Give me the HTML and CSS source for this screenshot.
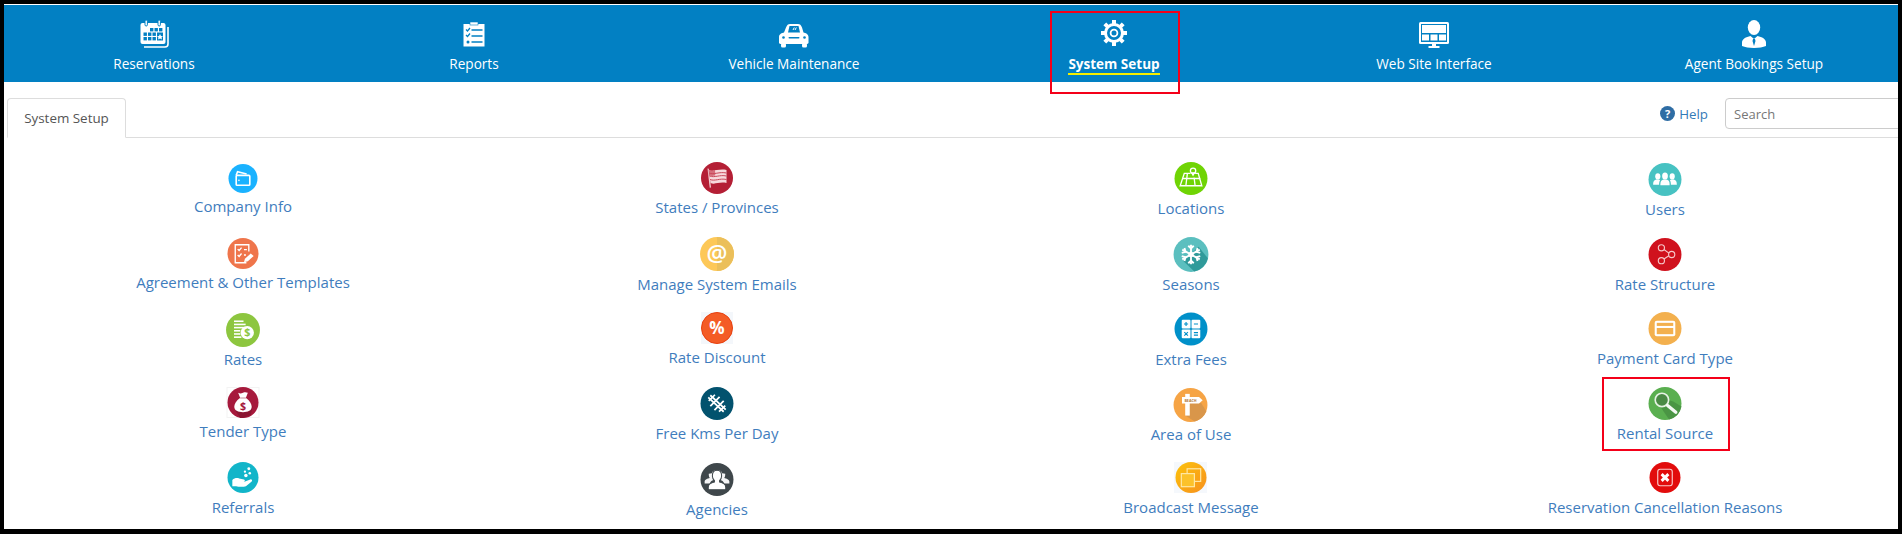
FILE: index.html
```html
<!DOCTYPE html>
<html lang="en">
<head>
<meta charset="utf-8">
<title>System Setup</title>
<link rel="stylesheet" href="styles.css">
</head>
<body>
<div class="frame">
<nav class="nav">
  <a class="nav-item">
    <svg class="nav-ico" width="32" height="28" viewBox="0 0 32 28"><rect x="2.500" y="3" width="25" height="21" rx="2" fill="#fff"/><path d="M30 7v17a3 3 0 0 1-3 3H6" fill="none" stroke="#fff" stroke-width="1.600"/><rect x="7" y="0" width="2.400" height="6" rx="1.200" fill="#fff" stroke="#0280c3"/><rect x="20" y="0" width="2.400" height="6" rx="1.200" fill="#fff" stroke="#0280c3"/><g fill="#0280c3"><rect x="12" y="8" width="3.400" height="3.400"/><rect x="16.500" y="8" width="3.400" height="3.400"/><rect x="21" y="8" width="3.400" height="3.400"/><rect x="5.500" y="12.500" width="3.400" height="3.400"/><rect x="10" y="12.500" width="3.400" height="3.400"/><rect x="14.500" y="12.500" width="3.400" height="3.400"/><rect x="5.500" y="17" width="3.400" height="3.400"/><rect x="10" y="17" width="3.400" height="3.400"/><rect x="14.500" y="17" width="3.400" height="3.400"/><rect x="19" y="12.500" width="6" height="8"/></g><path d="M22 14l1 2 2 .2-1.500 1.300.5 2-2-1-2 1 .5-2-1.500-1.300 2-.2z" fill="#fff"/></svg>
    <span class="nav-label">Reservations</span>
  </a>
  <a class="nav-item">
    <svg class="nav-ico" width="32" height="28" viewBox="0 0 32 28"><path d="M5.500 4h21v22.500h-21z" fill="#fff"/><rect x="12" y="2" width="8" height="3" fill="#fff" stroke="#0280c3" stroke-width=".6"/><g fill="none" stroke="#0280c3" stroke-width="1.300"><path d="M8 9.500l1.500 1.500 2.500-3M8 15l1.500 1.500 2.500-3"/><path d="M13.500 10h11M13.500 16h11M13.500 22h11" stroke-width="1.600"/></g><circle cx="10" cy="22" r="1.500" fill="#0280c3"/></svg>
    <span class="nav-label">Reports</span>
  </a>
  <a class="nav-item">
    <svg class="nav-ico" width="32" height="28" viewBox="0 0 32 28"><path d="M8 7.500C9 5 10 4 12 4h8c2 0 3 1 4 3.500l1.500 5c2 .5 5 1.500 5 4.500v6a2 2 0 0 1-2 1H3a2 2 0 0 1-2-1v-6c0-3 3-4 5-4.500z" fill="#fff"/><path d="M10 12.500l1.500-6.500h9l1.500 6.500z" fill="#0280c3"/><path d="M15 10l1.300-2.500M17 10l1.300-2.500" stroke="#fff" fill="none"/><rect x="10.500" y="17" width="11" height="1.600" rx=".8" fill="#0280c3"/><circle cx="5.500" cy="17.500" r="1.300" fill="#0280c3"/><circle cx="26.500" cy="17.500" r="1.300" fill="#0280c3"/><rect x="3" y="23" width="5" height="4.500" rx="1.500" fill="#fff"/><rect x="24" y="23" width="5" height="4.500" rx="1.500" fill="#fff"/></svg>
    <span class="nav-label">Vehicle Maintenance</span>
  </a>
  <a class="nav-item is-active">
    <svg class="nav-ico" width="32" height="28" viewBox="0 0 32 28"><circle cx="16" cy="13" r="8.500" fill="none" stroke="#fff" stroke-width="3"/><circle cx="16" cy="13" r="3.400" fill="none" stroke="#fff" stroke-width="1.800"/><g stroke="#fff" stroke-width="4"><path d="M16 0v4M16 22v4M3 13h4M25 13h4M6.800 3.800l2.800 2.800M22.400 19.400l2.800 2.800M6.800 22.200l2.800-2.800M22.400 6.600l2.800-2.800"/></g></svg>
    <span class="nav-label">System Setup</span>
  </a>
  <a class="nav-item">
    <svg class="nav-ico" width="32" height="28" viewBox="0 0 32 28"><rect x="1" y="2" width="30" height="22" rx="1.500" fill="#fff"/><rect x="3" y="4" width="26" height="18" fill="#0280c3"/><rect x="4" y="5" width="24" height="8" fill="#fff"/><rect x="4" y="14.500" width="7" height="6" fill="#fff"/><rect x="12.500" y="14.500" width="7" height="6" fill="#fff"/><rect x="21" y="14.500" width="7" height="6" fill="#fff"/><path d="M14 24h4v2h3.500v2h-11v-2H14z" fill="#fff"/></svg>
    <span class="nav-label">Web Site Interface</span>
  </a>
  <a class="nav-item">
    <svg class="nav-ico" width="32" height="28" viewBox="0 0 32 28"><ellipse cx="16" cy="7.500" rx="6.200" ry="7.500" fill="#fff"/><path d="M4 26v-3.500c0-3.500 4-5.500 8.500-6.500l3.500 3 3.500-3c4.500 1 8.500 3 8.500 6.500V26c-3 1.300-7 2-12 2s-9-.7-12-2z" fill="#fff"/><path d="M15 19h2l.5 2-1.500 5-1.500-5z" fill="#0280c3"/></svg>
    <span class="nav-label">Agent Bookings Setup</span>
  </a>
</nav>

<div class="tabbar">
  <div class="tab">System Setup</div>
  <div class="tools">
    <a class="help"><svg width="15" height="15" viewBox="0 0 15 15"><circle cx="7.500" cy="7.500" r="7.500" fill="#2e6da4"/><text x="7.500" y="11.500" class="help-q">?</text></svg>Help</a>
    <input class="search" type="text" placeholder="Search">
  </div>
</div>

<main class="grid">
  <a class="item"><svg class="ico" width="36" height="31"><g transform="translate(18 16.500) scale(.906)"><circle r="16" fill="#1ab2ff"/><g fill="none" stroke="#fff" stroke-width="1.800"><rect x="-7.500" y="-3.500" width="15" height="11" rx="1"/><path d="M-7.500-3.500L-6-7.500l10 2.500"/></g><circle cx="-4.500" cy="2" r=".9" fill="#fff"/></g></svg><span class="lbl">Company Info</span></a>

  <a class="item"><svg class="ico" width="36" height="32"><g transform="translate(18 16.500) scale(.969)"><circle r="16" fill="#ef754b"/><g fill="none" stroke="#fff" stroke-width="1.400"><path d="M3.500 9.500H-8V-9H6v7"/><path d="M-5.500-4.500l1.500 1.500 2.500-3M-5.500 1.500L-4 3l2.500-3M1-4h3M1 1.500h2"/></g><path d="M1 9l1-3.500L8 0l3 2.500-6 5.500z" fill="#fff"/></g></svg><span class="lbl">Agreement &amp; Other Templates</span></a>

  <a class="item"><svg class="ico" width="36" height="34"><g transform="translate(18 18) scale(1.060)"><circle r="16" fill="#8dc63f"/><g fill="#fff"><rect x="-8.500" y="-9" width="9" height="1.500"/><rect x="-8.500" y="-6" width="11" height="1.500"/><rect x="-8.500" y="-3" width="11" height="1.500"/><rect x="-8.500" y="0" width="6" height="1.500"/><rect x="-8.500" y="3" width="6" height="1.500"/><rect x="-8.500" y="6" width="7" height="1.500"/><circle cx="4" cy="2.500" r="6.300"/></g><text x="4" y="6" class="ico-t cash">$</text></g></svg><span class="lbl">Rates</span></a>

  <a class="item"><svg class="ico" width="36" height="31"><rect x="2" y=".5" width="32" height="30" fill="none" stroke="#f3f3f3"/><g transform="translate(18 15.500) scale(.969)"><circle r="16" fill="#a6193c"/><path d="M0-8L10 4 8 13 0 16h-3L-8 8z" fill="#8b1532"/><path d="M-5-10c2 1 3 .8 5 0s3-.6 5 0L3-5H-3zM-3.500-4.500h7C7-2 9 1.500 9 4.500 9 8.500 5 10 0 10s-9-1.500-9-5.500c0-3 2-6.500 5.500-9z" fill="#fff"/><text x="0" y="7.500" class="ico-t bag">$</text></g></svg><span class="lbl">Tender Type</span></a>

  <a class="item"><svg class="ico" width="36" height="32"><g transform="translate(18 15.500) scale(.969)"><circle r="16" fill="#12b5c9"/><g fill="#fff"><path d="M-11 2.500c2-2 5-2.500 7-1.500l5 1c1.500.5 1 2.500-.5 2.500H-3 1.500l6-2.500c1.500-.5 2.500 1 1.500 2L3 9c-3 1-8 .5-10 0h-4z"/><circle cx="3" cy="-2" r="1.800"/><circle cx="7" cy="-4.500" r="1.300"/><circle cx="2" cy="-6" r="1.200"/><circle cx="6" cy="-9" r="1.500"/></g></g></svg><span class="lbl">Referrals</span></a>

  <a class="item"><svg class="ico" width="36" height="32"><g transform="translate(18 16)"><circle r="16" fill="#b41f35"/><path d="M-9.500-9.500l1.300.2L-6 9.500l-1.300.2z" fill="#f2ccd1"/><path d="M-8.500-8c5 2 10-1.500 18 0V5C2 3.500-2 7-6.500 5z" fill="#f7d9dc"/><path d="M-8-5c5 2 10-1.500 17.500 0M-7.500-2c5 2 10-1.500 17 0M-7 1.500c5 2 9.500-1.500 16.500 0" stroke="#c9485a" fill="none" stroke-width="1"/><path d="M-8.500-8c2 .8 4 .6 6.500 0l.3 5.500c-2.500.6-4.500.7-6.300 0z" fill="#c9485a" opacity=".75"/></g></svg><span class="lbl">States / Provinces</span></a>

  <a class="item"><svg class="ico" width="36" height="34"><g transform="translate(18 17) scale(1.060)"><circle r="16" fill="#fdc858"/><path d="M0-16a16 16 0 0 1 0 32z" fill="#ebbf5a"/><text x="0" y="7.500" class="ico-t at">@</text></g></svg><span class="lbl">Manage System Emails</span></a>

  <a class="item"><svg class="ico" width="36" height="32"><rect x="2" y="0" width="32" height="32" fill="#f4f7fb"/><g transform="translate(18 16)"><circle r="15.500" fill="#f45c26" stroke="#e8400f"/><text x="0" y="6" class="ico-t pct">%</text></g></svg><span class="lbl">Rate Discount</span></a>

  <a class="item"><svg class="ico" width="36" height="33"><g transform="translate(18 16.500) scale(1.030)"><circle r="16" fill="#02526e"/><g stroke="#fff" stroke-width="1.700" fill="none"><path d="M-6.500-8L8.500 6M-8.500-6L6.500 8"/><path d="M-2-8.500L-8 -2.500M2.500-6.500L-6.500 2.500M6.500-2.500L-2.500 6.500M8 2L2 8"/></g></g></svg><span class="lbl">Free Kms Per Day</span></a>

  <a class="item"><svg class="ico" width="36" height="34"><g transform="translate(18 17.500) scale(1.030)"><circle r="16" fill="#3f474b"/><g fill="#fff"><path d="M-5-6a4 4 0 0 1 3-3c-.7 3-.2 5 1 7l-1 2c-3 .8-4.500 2-5 4h-5V2c0-2 3-3 5-3.500-1-1-1-3-1-4z" opacity=".95"/><path d="M5-6a4 4 0 0 0-3-3c.7 3 .2 5-1 7l1 2c3 .8 4.500 2 5 4h5V2c0-2-3-3-5-3.500 1-1 1-3 1-4z" opacity=".95"/><path d="M0-9c3 0 4.500 2.500 4.500 5.500 0 2-1 3.500-2 4.500v1.500c3 .7 6 2 6 5V10h-17V7.500c0-3 3-4.300 6-5V1c-1-1-2-2.500-2-4.500C-4.500-6.500-3-9 0-9z" stroke="#3f474b"/></g></g></svg><span class="lbl">Agencies</span></a>

  <a class="item"><svg class="ico" width="36" height="33"><g transform="translate(18 16.500) scale(1.030)"><circle r="16" fill="#6fd404"/><g fill="none" stroke="#fff" stroke-width="1.300"><path d="M-.5-5H-6.500L-10.500 7H10.500L7-5H4"/><path d="M-8.500 0H9M-3.500-5L-5 7M3-1L4 7"/><circle cx="2" cy="-7.500" r="2.600"/></g><path d="M-.3-6L2-2 4.300-6z" fill="#fff"/></g></svg><span class="lbl">Locations</span></a>

  <a class="item"><svg class="ico" width="36" height="34"><g transform="translate(18 17.500) scale(1.090)"><circle r="16" fill="#5bbfbf"/><path d="M7-7L15.500 3.500A16 16 0 0 1 3 15.700L-7 6z" fill="#2f9a9a"/><g stroke="#fff" stroke-width="1.700" fill="none"><path d="M0-9V9M-8-4.500L8 4.500M-8 4.500L8-4.500"/><path d="M-2.500-8L0-5.500 2.500-8M-2.500 8L0 5.500 2.500 8M-8.500-1.500L-5-2.500-6-6M8.500 1.500L5 2.500 6 6M-8.500 1.500L-5 2.500-6 6M8.500-1.500L5-2.500 6-6"/></g><circle r="2.500" fill="#fff"/></g></svg><span class="lbl">Seasons</span></a>

  <a class="item"><svg class="ico" width="36" height="34"><g transform="translate(18 17) scale(1.030)"><circle r="16" fill="#0090c9"/><g fill="#fff"><rect x="-9" y="-9" width="8.500" height="8.500" rx="1"/><rect x=".5" y="-9" width="8.500" height="8.500" rx="1"/><rect x="-9" y=".5" width="8.500" height="8.500" rx="1"/><rect x=".5" y=".5" width="8.500" height="8.500" rx="1"/></g><path d="M-6.800-4.800h4M-4.800-6.800v4M2.800-4.800h4M-6.500 3l3.500 3.500M-3 3l-3.500 3.500M2.800 3.500h4M2.800 6h4" stroke="#0090c9" stroke-width="1.100" fill="none"/></g></svg><span class="lbl">Extra Fees</span></a>

  <a class="item"><svg class="ico" width="36" height="34"><g transform="translate(17.500 18) scale(1.060)"><circle r="16" fill="#f6a445"/><path d="M-1-2H10L15 6A16 16 0 0 1 4 15.500L-5 10z" fill="#d9964a"/><rect x="-5" y="-10.500" width="4.300" height="20.500" fill="#fff"/><path d="M-8-7.500H8L11.500-4.500 8-1.500H-8z" fill="#fff"/><text x="0" y="-3" class="ico-t beach">BEACH</text></g></svg><span class="lbl">Area of Use</span></a>

  <a class="item"><svg class="ico" width="36" height="32"><defs><linearGradient id="bm" x1="0" y1="0" x2="1" y2="1"><stop offset="0" stop-color="#fcc30b"/><stop offset="1" stop-color="#f7901e"/></linearGradient></defs><rect x="1" y="0" width="33" height="31" fill="#f5f8fc"/><g transform="translate(18 15.500) scale(.969)"><circle r="16" fill="url(#bm)"/><rect x="-4" y="-9" width="14" height="13" fill="none" stroke="#ffe9a8" stroke-width="1.200"/><rect x="-10" y="-4" width="13.500" height="13.500" fill="#fcc22a" stroke="#ffe9a8" stroke-width="1.200"/></g></svg><span class="lbl">Broadcast Message</span></a>

  <a class="item"><svg class="ico" width="36" height="34"><g transform="translate(18 17.500) scale(1.030)"><circle r="16" fill="#47c2c2"/><g fill="#fff"><ellipse cx="0" cy="-3.500" rx="2.800" ry="3.400"/><path d="M-4.500 5.500c0-4 1-5.500 4.500-5.500s4.500 1.500 4.500 5.500z"/><ellipse cx="-7" cy="-3" rx="2.500" ry="3"/><path d="M-11.500 5c0-3.500 1-5 4.500-5 1 0 1.700.2 2.300.6C-5.500 2-5.700 3.500-5.700 5z"/><ellipse cx="7" cy="-3" rx="2.500" ry="3"/><path d="M11.500 5c0-3.500-1-5-4.500-5-1 0-1.700.2-2.300.6C5.500 2 5.700 3.500 5.700 5z"/></g></g></svg><span class="lbl">Users</span></a>

  <a class="item"><svg class="ico" width="36" height="34"><g transform="translate(18 17.500) scale(1.030)"><circle r="16" fill="#d0111d"/><g fill="none" stroke="#f6c6c8" stroke-width="1.100"><circle cx="-3.500" cy="-6.500" r="3"/><circle cx="-3.500" cy="6" r="3"/><circle cx="6.500" cy="0" r="3"/><path d="M-1 -4.800L3.800-1.300M-1 4.400L3.800 1.300"/></g></g></svg><span class="lbl">Rate Structure</span></a>

  <a class="item"><svg class="ico" width="36" height="33"><g transform="translate(18 16.500) scale(1.030)"><circle r="16" fill="#f3b04e"/><rect x="-10" y="-7.500" width="20" height="15" rx="2" fill="#fff"/><rect x="-8" y="-5.500" width="16" height="3" fill="#f3b04e"/><rect x="-8" y="-.5" width="16" height="6" fill="#f3b04e"/></g></svg><span class="lbl">Payment Card Type</span></a>

  <a class="item"><svg class="ico" width="36" height="33"><g transform="translate(18 16.500) scale(1.030)"><circle r="16" fill="#5aaf50"/><path d="M-5-6L8-2 16 3A16 16 0 0 1 4 15.500L-8-2z" fill="#4a9544"/><circle cx="-3" cy="-3.500" r="6.500" fill="#4a8a45" stroke="#e6f2e4" stroke-width="1.600"/><path d="M2.500 2l8 6.500" stroke="#f4f9f3" stroke-width="3.200" stroke-linecap="round"/></g></svg><span class="lbl">Rental Source</span></a>

  <a class="item"><svg class="ico" width="36" height="32"><g transform="translate(18 15.500) scale(.969)"><circle r="16" fill="#e20c0c"/><rect x="-7.500" y="-8.500" width="15" height="17" rx="2.500" fill="#e20c0c" stroke="#f9c9c9" stroke-width="1.200"/><path d="M-3.500-3.500L3.500 3.500M3.500-3.500L-3.500 3.500" stroke="#fff" stroke-width="3"/></g></svg><span class="lbl">Reservation Cancellation Reasons</span></a>
</main>

<div class="mark mark-setup"></div>
<div class="mark mark-source"></div>
</div>
</body>
</html>
```
FILE: styles.css
```css
* { box-sizing: border-box; }
html, body { margin: 0; padding: 0; }
body { background: #000; font-family: "Open Sans", "Noto Sans", sans-serif; }
.frame {
  position: relative;
  height: 534px;
  border-style: solid;
  border-color: #000;
  border-width: 4px 4px 5px 4px;
  background: #fff;
  overflow: hidden;
  padding-top: 1px;
}
.nav {
  display: flex;
  height: 77px;
  margin-left: -10px;
  width: 1920px;
  background: #0280c3;
}
.nav-item {
  flex: 0 0 320px;
  display: flex;
  flex-direction: column;
  align-items: center;
  padding-top: 15px;
  color: #fff;
  font-size: 13.6px;
}
.nav-ico { display: block; }
.nav-label { margin-top: 7px; line-height: 18px; }
.is-active .nav-label { font-size: 13.5px; font-weight: 700; border-bottom: 2px solid #f5ee00; line-height: 18px; }
.tabbar {
  display: flex;
  justify-content: space-between;
  margin: 16px 0 0 3px;
  height: 40px;
  border-bottom: 1px solid #ddd;
}
.tab {
  height: 40px;
  width: 119px;
  padding-top: 10px;
  text-align: center;
  font-size: 13.4px;
  line-height: 18px;
  color: #555;
  background: #fff;
  border: 1px solid #ddd;
  border-bottom-color: #fff;
  border-radius: 4px 4px 0 0;
}
.tools { display: flex; align-items: flex-start; margin-right: -30px; }
.help {
  display: flex;
  align-items: center;
  gap: 4px;
  height: 31px;
  font-size: 13.3px;
  color: #337ab7;
  margin-right: 17px;
}
.help-q { font-size: 11px; font-weight: 700; fill: #fff; text-anchor: middle; }
.search {
  width: 203px;
  height: 31px;
  padding: 0 8px;
  font: 13px "Open Sans", sans-serif;
  border: 1px solid #ccc;
  border-radius: 4px;
  background: #fff;
}
.search::placeholder { color: #777; opacity: 1; }
.grid {
  display: grid;
  grid-template-columns: repeat(4, 474px);
  grid-auto-flow: column;
  grid-template-rows: repeat(5, 75px);
  width: 1896px;
  margin: 24px 0 0 2px;
}
.item { display: flex; flex-direction: column; align-items: center; }
.ico { display: block; flex: none; overflow: visible; }
.lbl { margin-top: 3px; font-size: 15px; line-height: 20px; color: #3f7dbd; white-space: nowrap; }
.ico-t { font-family: "Open Sans", sans-serif; text-anchor: middle; font-weight: 700; }
.cash { font-size: 10px; fill: #8dc63f; }
.bag { font-size: 11px; fill: #a6193c; }
.at { font-size: 22px; font-weight: 600; fill: #fff; }
.pct { font-size: 17px; fill: #fff; }
.beach { font-size: 3.500px; fill: #b67a35; }
.mark { position: absolute; border: 2px solid #f40019; pointer-events: none; }
.mark-setup { left: 1046px; top: 7px; width: 130px; height: 83px; }
.mark-source { left: 1598px; top: 373px; width: 128px; height: 74px; }
```
